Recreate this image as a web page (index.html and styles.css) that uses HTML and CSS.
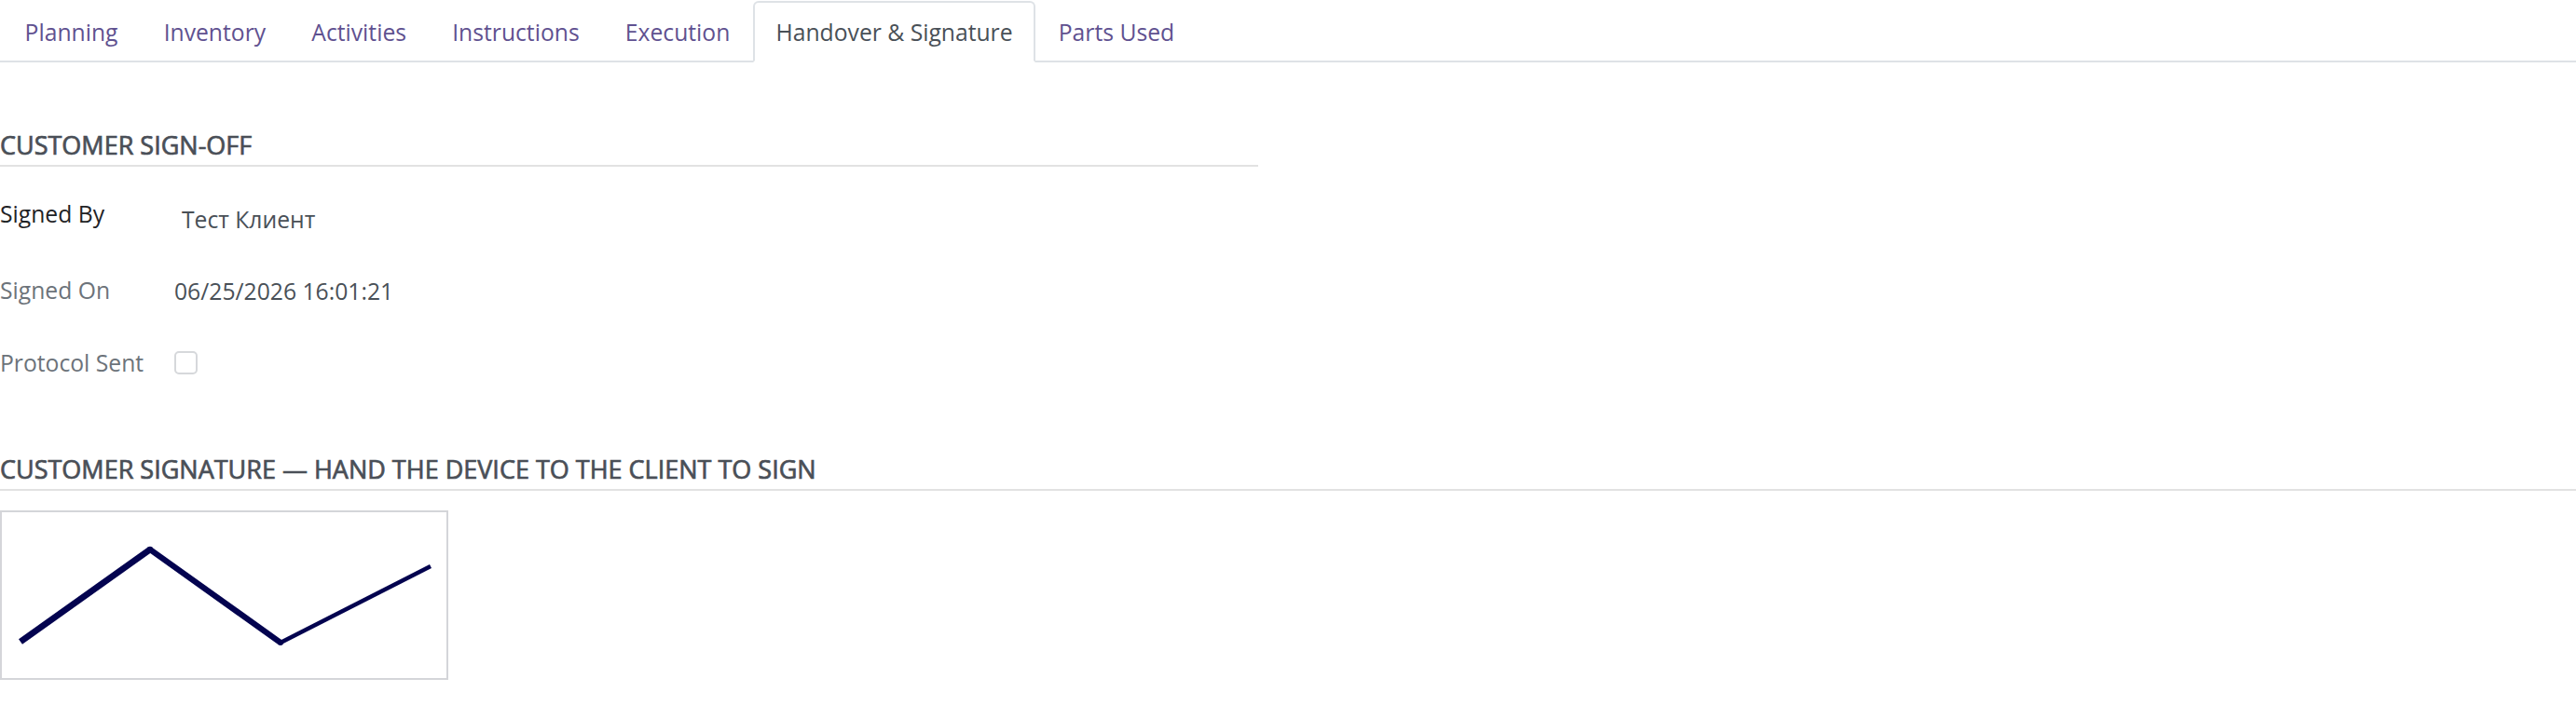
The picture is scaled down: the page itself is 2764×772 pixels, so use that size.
FILE: index.html
```html
<!DOCTYPE html>
<html lang="en">
<head>
<meta charset="utf-8">
<title>Handover &amp; Signature</title>
<link rel="stylesheet" href="styles.css">
</head>
<body>
<ul class="tabs">
  <li class="tab">Planning</li>
  <li class="tab">Inventory</li>
  <li class="tab">Activities</li>
  <li class="tab">Instructions</li>
  <li class="tab">Execution</li>
  <li class="tab active">Handover &amp; Signature</li>
  <li class="tab">Parts Used</li>
</ul>

<section class="group half">
  <h2 class="separator">CUSTOMER SIGN-OFF</h2>
  <div class="fields">
    <div class="field-row row-1">
      <div class="field-label strong">Signed By</div>
      <div class="field-value value-input">Тест Клиент</div>
    </div>
    <div class="field-row row-2">
      <div class="field-label">Signed On</div>
      <div class="field-value value-date">06/25/2026 16:01:21</div>
    </div>
    <div class="field-row row-3">
      <div class="field-label">Protocol Sent</div>
      <div class="field-value"><span class="checkbox"></span></div>
    </div>
  </div>
</section>

<section class="group full">
  <h2 class="separator">CUSTOMER SIGNATURE — HAND THE DEVICE TO THE CLIENT TO SIGN</h2>
  <div class="signature-box">
    <svg class="signature" width="477" height="178" viewBox="0 0 477 178">
      <line x1="20" y1="139" x2="159" y2="40" stroke="#03034f" stroke-width="6.8" stroke-linecap="butt"/>
      <line x1="159" y1="40" x2="299" y2="140" stroke="#03034f" stroke-width="6.3" stroke-linecap="butt"/>
      <line x1="299" y1="140" x2="460" y2="58" stroke="#03034f" stroke-width="4.6" stroke-linecap="butt"/>
      <circle cx="159" cy="40" r="3.2" fill="#03034f"/>
      <circle cx="299" cy="140" r="3" fill="#03034f"/>
    </svg>
  </div>
</section>
</body>
</html>
```

FILE: styles.css
```css
html, body {
  margin: 0;
  padding: 0;
  background: #ffffff;
}

body {
  font-family: "Open Sans", "Noto Sans", "Liberation Sans", sans-serif;
  font-size: 24.7px;
  line-height: 37px;
  color: #495057;
}

/* Tabs */
.tabs {
  list-style: none;
  margin: 0;
  padding: 1px 0 0 2px;
  display: flex;
  border-bottom: 2px solid #dee2e6;
}

.tab {
  padding: 13px 22.6px 12px;
  border: 2px solid transparent;
  border-top-left-radius: 6px;
  border-top-right-radius: 6px;
  margin-bottom: -2px;
  color: #5f5190;
  white-space: nowrap;
}

.tab.active {
  color: #495057;
  border-color: #dee2e6 #dee2e6 #ffffff;
  background: #ffffff;
}

/* Groups */
.group.half {
  width: 1350px;
}

.group.full {
  width: 100%;
}

.separator {
  margin: 0;
  font-size: 27px;
  line-height: 37px;
  font-weight: 400;
  -webkit-text-stroke: 0.7px #4a4f57;
  color: #4a4f57;
  padding-bottom: 3px;
  border-bottom: 2px solid #e2e2e2;
  white-space: nowrap;
}

.group.half .separator {
  margin-top: 70px;
}

.group.full .separator {
  margin-top: 77px;
}

/* Fields */
.fields {
  padding-top: 32px;
}

.field-row {
  display: flex;
  align-items: flex-start;
}

.row-1 { height: 82px; }
.row-2 { height: 78px; }
.row-3 { height: 37px; }

.field-label {
  width: 187px;
  flex: none;
  color: #6c737a;
}

.field-label.strong {
  color: #1f2326;
}

.field-value {
  color: #495057;
}

.value-input {
  padding: 6px 0 0 8px;
}

.value-date {
  padding-top: 1px;
}

.checkbox {
  display: block;
  margin-top: 6px;
  width: 21px;
  height: 21px;
  border: 2px solid #d6d8db;
  border-radius: 5px;
  background: #ffffff;
}

/* Signature */
.signature-box {
  margin-top: 21px;
  width: 477px;
  height: 178px;
  border: 2px solid #d4d5d9;
  background: #ffffff;
}

.signature {
  display: block;
}
```
